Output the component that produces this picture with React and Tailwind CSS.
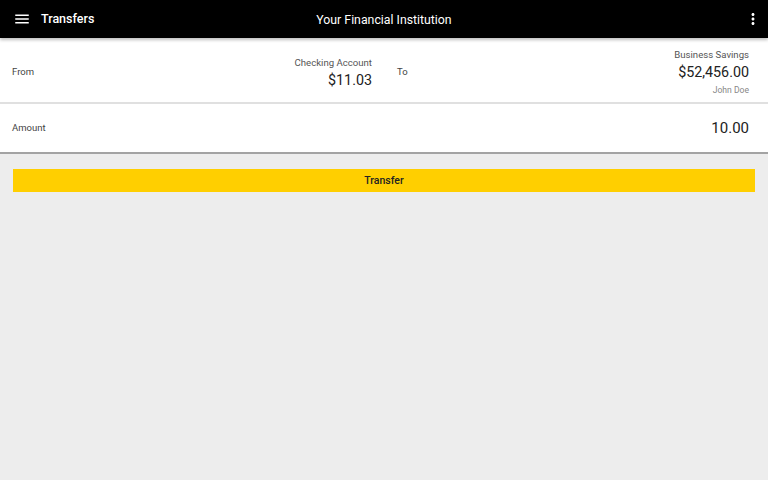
import { MdMenu, MdMoreVert } from "react-icons/md";

const App = () => {
  return (
    <div className="w-[768px] h-[480px] bg-[#ededed] font-['Roboto',sans-serif] overflow-hidden">
      <div className="relative z-10 h-[38px] bg-black flex items-center shadow-[0_2px_3px_rgba(0,0,0,0.25)]">
        <MdMenu className="ml-[13px] text-[18px] text-white" />
        <h1 className="ml-[10px] text-[12.5px] font-medium text-white">Transfers</h1>
        <p className="absolute left-1/2 -translate-x-1/2 top-[11px] text-[12.3px] text-white">
          Your Financial Institution
        </p>
        <MdMoreVert className="ml-auto mr-[6px] text-[18px] text-white" />
      </div>

      <div className="bg-white">
        <div className="h-[66px] pt-[4px] flex border-b-2 border-[#e0e0e0]">
          <div className="w-1/2 flex items-center pl-3 pr-3">
            <span className="text-[9.5px] text-[#444]">From</span>
            <div className="ml-auto flex flex-col items-end">
              <span className="text-[9.6px] text-[#555] leading-[15px]">Checking Account</span>
              <span className="text-[14.3px] text-[#222] leading-[20px]">$11.03</span>
            </div>
          </div>
          <div className="w-1/2 flex items-center pl-[13px] pr-[19px]">
            <span className="text-[9.5px] text-[#444]">To</span>
            <div className="ml-auto flex flex-col items-end">
              <span className="text-[9.6px] text-[#555] leading-[15px]">Business Savings</span>
              <span className="text-[14.3px] text-[#222] leading-[20px]">$52,456.00</span>
              <span className="text-[8.6px] text-[#888] leading-[16px]">John Doe</span>
            </div>
          </div>
        </div>
        <div className="h-[50px] flex items-center pl-3 pr-[19px] border-b-2 border-[#a3a3a3]">
          <span className="text-[9.5px] text-[#444]">Amount</span>
          <span className="ml-auto text-[15px] text-[#222]">10.00</span>
        </div>
      </div>

      <div className="px-[13px] pt-[13px]">
        <button className="w-full h-[23px] bg-[#ffcf00] text-[10.5px] font-medium text-[#222]">
          Transfer
        </button>
      </div>
    </div>
  );
};

export default App;
